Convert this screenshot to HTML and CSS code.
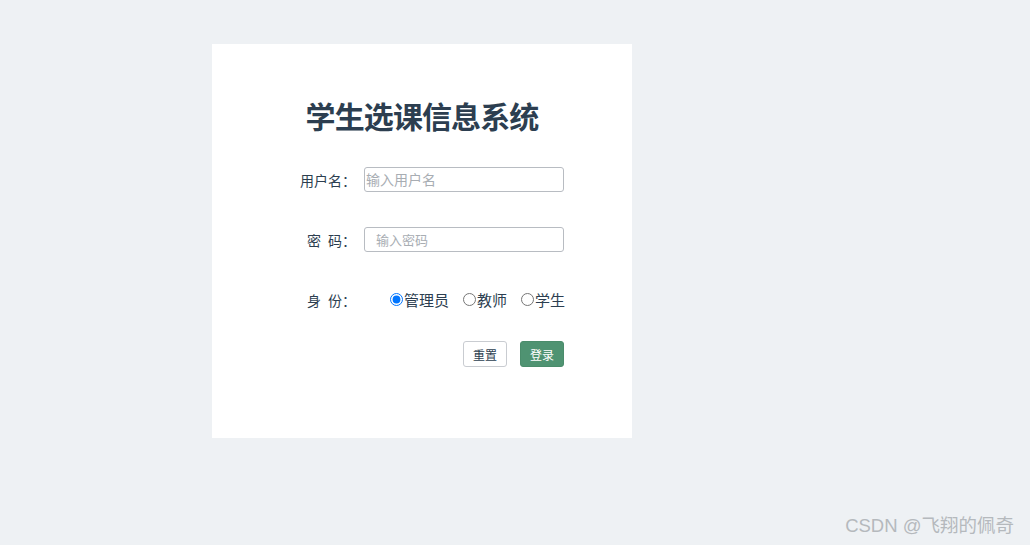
FILE: index.html
```html
<!DOCTYPE html>
<html lang="zh">
<head>
<meta charset="utf-8">
<title>学生选课信息系统</title>
<link rel="stylesheet" href="styles.css">
</head>
<body>
<div class="page">
  <div class="card">
    <h1 class="title">学生选课信息系统</h1>
    <form class="form">
      <div class="row">
        <label class="label">用户名：</label>
        <input class="input input-user" type="text" placeholder="输入用户名">
      </div>
      <div class="row">
        <label class="label">密&ensp;码：</label>
        <input class="input input-pass" type="password" placeholder="输入密码">
      </div>
      <div class="row row-role">
        <label class="label">身&ensp;份：</label>
        <div class="radios">
          <label class="radio"><input type="radio" name="role" checked>管理员</label>
          <label class="radio"><input type="radio" name="role">教师</label>
          <label class="radio"><input type="radio" name="role">学生</label>
        </div>
      </div>
      <div class="actions">
        <button type="button" class="btn btn-reset">重置</button>
        <button type="button" class="btn btn-login">登录</button>
      </div>
    </form>
  </div>
</div>
<div class="watermark">CSDN @飞翔的佩奇</div>
</body>
</html>
```
FILE: styles.css
```css
html, body {
  margin: 0;
  padding: 0;
}
body {
  background: #eef1f4;
  font-family: "Noto Sans CJK SC", "Noto Sans", sans-serif;
  color: #2c3e50;
  width: 1030px;
  height: 545px;
  overflow: hidden;
  position: relative;
}
.page {
  padding: 44px 0 0 212px;
}
.card {
  width: 420px;
  height: 394px;
  background: #fff;
  box-sizing: border-box;
  padding-top: 53px;
}
.title {
  margin: 0;
  text-align: center;
  font-size: 30px;
  line-height: 36px;
  font-weight: 700;
  color: #2c3e50;
  letter-spacing: -0.9px;
}
.form {
  margin-top: 34px;
  padding-left: 60px;
}
.row {
  display: flex;
  align-items: center;
  height: 25px;
  margin-bottom: 35px;
}
.row-role {
  margin-bottom: 29px;
}
.label {
  width: 84px;
  text-align: right;
  font-size: 14px;
  margin-right: 8px;
  color: #2c3e50;
}
.input {
  width: 200px;
  height: 25px;
  box-sizing: border-box;
  border: 1px solid #b8bcc2;
  border-radius: 3px;
  font-family: inherit;
  font-size: 14px;
  color: #2c3e50;
  outline: none;
}
.input-user {
  padding: 0 0 1px 1px;
}
.input-pass {
  padding: 0 0 0 11px;
  font-size: 13px;
}
.input::placeholder {
  color: #a8adb3;
}
.radios {
  display: flex;
  align-items: center;
  padding-left: 26px;
  gap: 14px;
}
.radio {
  display: flex;
  align-items: center;
  font-size: 15px;
  color: #2c3e50;
}
.radio input {
  width: 13px;
  height: 13px;
  margin: 0 1px 0 0;
}
.actions {
  display: flex;
  justify-content: flex-end;
  gap: 13px;
  width: 292px;
}
.btn {
  width: 44px;
  height: 26px;
  padding: 0;
  border-radius: 3px;
  font-family: inherit;
  font-size: 12px;
  cursor: pointer;
}
.btn-reset {
  background: #fff;
  border: 1px solid #c9ccd1;
  color: #2c3e50;
}
.btn-login {
  background: #4f9372;
  border: 1px solid #4a8c6b;
  color: #fff;
}
.watermark {
  position: absolute;
  right: 16px;
  bottom: 8px;
  font-size: 18.5px;
  color: #b5b9bd;
  font-family: "Liberation Sans", "Noto Sans CJK SC", sans-serif;
}
```
